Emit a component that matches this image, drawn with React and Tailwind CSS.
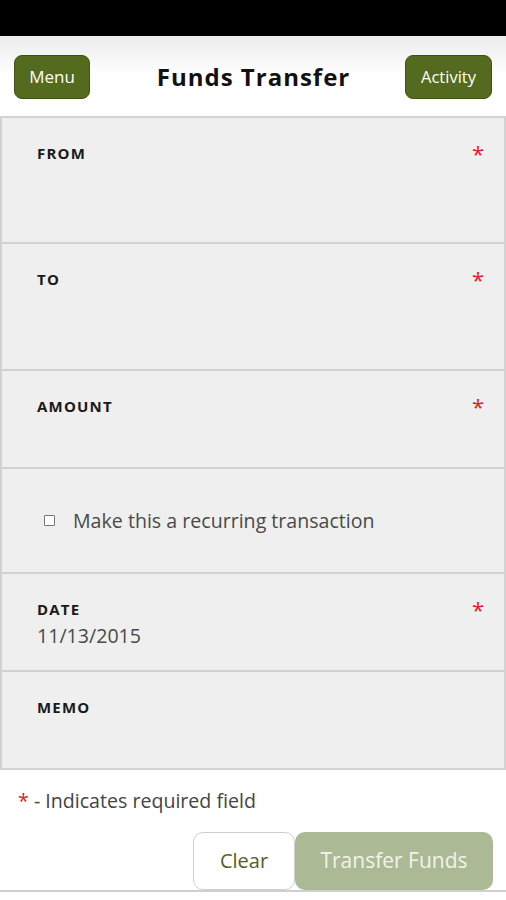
export default function App() {
  const font = { fontFamily: '"Open Sans", "Noto Sans", sans-serif' };
  const Label = ({ children }) => (
    <span className="text-[15px] font-bold tracking-[1.2px] text-[#1a1a1a] leading-[20px]">{children}</span>
  );
  const Star = () => <span className="text-[22px] leading-[20px] text-[#e02020]">*</span>;
  return (
    <div className="w-[506px] h-[900px] bg-white overflow-hidden" style={font}>
      <div className="h-[36px] bg-black" />
      <div className="h-[80px] bg-gradient-to-b from-[#ececec] via-white to-white flex items-center justify-between px-[14px] pt-[2px]">
        <button className="w-[76px] h-[44px] rounded-[8px] bg-[#546b1f] border border-[#3e5410] text-white text-[17px]">Menu</button>
        <div className="text-[24px] font-bold text-[#111] tracking-[1px] ml-[12px]">Funds Transfer</div>
        <button className="w-[87px] h-[44px] rounded-[8px] bg-[#546b1f] border border-[#3e5410] text-white text-[16.5px]">Activity</button>
      </div>
      <div className="border-2 border-b-0 border-[#d2d2d2] bg-[#efefef]">
        <div className="h-[126px] border-b-2 border-[#d2d2d2] flex justify-between pl-[35px] pr-[20px] pt-[25px]">
          <Label>FROM</Label><Star />
        </div>
        <div className="h-[127px] border-b-2 border-[#d2d2d2] flex justify-between pl-[35px] pr-[20px] pt-[25px]">
          <Label>TO</Label><Star />
        </div>
        <div className="h-[98px] border-b-2 border-[#d2d2d2] flex justify-between pl-[35px] pr-[20px] pt-[25px]">
          <Label>AMOUNT</Label><Star />
        </div>
        <div className="h-[105px] border-b-2 border-[#d2d2d2] flex items-center pl-[42px]">
          <span className="w-[11px] h-[11px] border border-[#777] rounded-[1px] bg-white mr-[18px]" />
          <span className="text-[19.6px] text-[#4a4a4a]">Make this a recurring transaction</span>
        </div>
        <div className="h-[98px] border-b-2 border-[#d2d2d2] flex justify-between pl-[35px] pr-[20px] pt-[25px]">
          <div className="flex flex-col">
            <Label>DATE</Label>
            <span className="text-[19.6px] text-[#4a4a4a] leading-[24px] mt-[5px]">11/13/2015</span>
          </div>
          <Star />
        </div>
        <div className="h-[98px] border-b-2 border-[#d2d2d2] flex justify-between pl-[35px] pr-[20px] pt-[25px]">
          <Label>MEMO</Label>
        </div>
      </div>
      <div className="pl-[18px] pt-[18px] text-[19.6px] text-[#444] leading-[26px]">
        <span className="text-[#e02020]">*</span> - Indicates required field
      </div>
      <div className="flex justify-end pr-[13px] mt-[18px] border-b-2 border-[#cfcfcf]">
        <button className="w-[102px] h-[58px] rounded-[10px] border border-[#cfcfcf] bg-white text-[20px] text-[#4f5f2a]">Clear</button>
        <button className="w-[198px] h-[58px] rounded-[10px] bg-[#abb994] text-[21px] text-[#f1f3ea]">Transfer Funds</button>
      </div>
    </div>
  );
}
